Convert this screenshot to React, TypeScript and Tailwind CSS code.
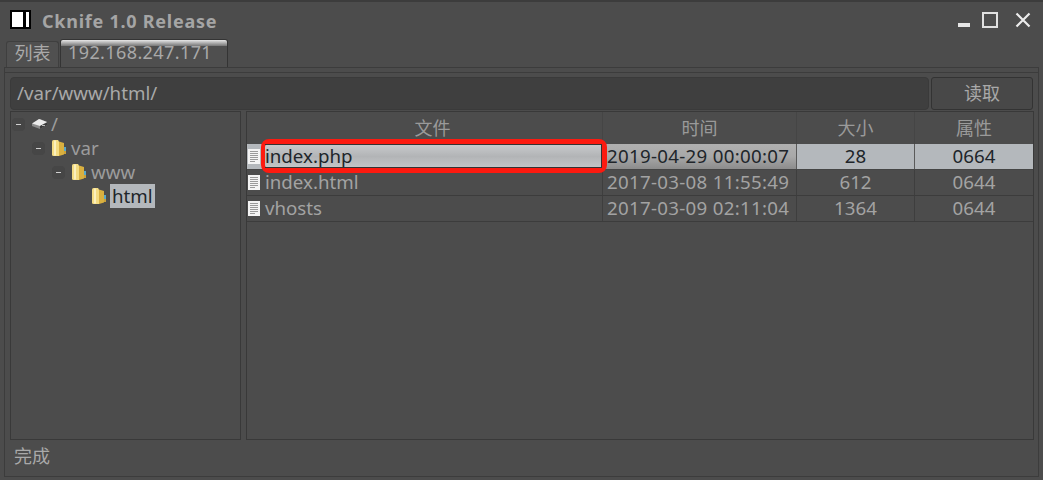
import React from 'react';

const FILES = [
  { name: 'index.php', time: '2019-04-29 00:00:07', size: '28', attr: '0664', selected: true },
  { name: 'index.html', time: '2017-03-08 11:55:49', size: '612', attr: '0644', selected: false },
  { name: 'vhosts', time: '2017-03-09 02:11:04', size: '1364', attr: '0644', selected: false },
];

const FolderIcon = () => (
  <svg width="16" height="18" viewBox="0 0 16 18" className="shrink-0">
    <path d="M1 2.5 Q1 1 2.5 1 H7 L8 2.5 V17 H2.5 Q1 17 1 15.5 Z" fill="#f4dc82" />
    <path d="M8 2.5 L13 4 V15.5 L8 17 Z" fill="#d9b040" />
    <rect x="3" y="1.5" width="2" height="15" fill="#fbf0bd" />
    <rect x="13" y="8" width="2" height="4" fill="#5ba8c8" />
    <rect x="13" y="12" width="2" height="3" fill="#c9a13a" />
  </svg>
);

const DriveIcon = () => (
  <svg width="17" height="12" viewBox="0 0 17 12" className="shrink-0">
    <path d="M1 6 L9 1 L16 4 L16 7 L9 11 L1 8 Z" fill="#8d8d8d" />
    <path d="M1 5.5 L8 1 L16 4 L9 8 Z" fill="#ececec" />
    <path d="M9 8 L16 4.5 V7 L9 11 Z" fill="#3a3a3a" />
    <rect x="11" y="7" width="3" height="1" fill="#bdbdbd" />
  </svg>
);

const FileIcon = () => (
  <svg width="12" height="15" viewBox="0 0 12 15" className="shrink-0">
    <rect x="0" y="0" width="12" height="15" fill="#f4f4f4" />
    <path d="M2 2.5 H10 M2 4.5 H10 M2 6.5 H10 M2 8.5 H10 M2 10.5 H10 M2 12.5 H7" stroke="#9a9a9a" strokeWidth="1" />
  </svg>
);

const Minus = () => (
  <span className="flex h-[13px] w-[13px] shrink-0 items-center justify-center rounded-sm bg-[#464646]">
    <span className="h-px w-[5px] bg-[#d0d0d0]" />
  </span>
);

export default function App() {
  return (
    <div
      className="relative flex h-[480px] w-[1043px] flex-col overflow-hidden border-t-2 border-[#3c3c3c] bg-[#4c4c4c] text-[18.7px] text-[#a9a9a9]"
      style={{ fontFamily: '"Noto Sans", "Noto Sans CJK SC", sans-serif' }}
    >
      {/* Title bar */}
      <div className="flex h-[38px] shrink-0 items-center pb-[3px] pl-[10px] pr-[12px]">
        <div className="flex h-[19px] w-[21px] justify-end border-2 border-black bg-white pr-[3px]">
          <span className="w-[3px] bg-black" />
        </div>
        <span className="ml-[11px] mt-[3px] text-[18px] font-bold tracking-[0.75px] text-[#a5a5a5]">Cknife 1.0 Release</span>
        <div className="ml-auto flex items-center">
          <span className="mt-[10px] h-[4px] w-[12px] bg-[#e6e6e6]" />
          <span className="ml-[12px] h-[16px] w-[16px] border-2 border-[#e0e0e0]" />
          <svg width="16" height="16" viewBox="0 0 16 16" className="ml-[17px]">
            <path d="M1.5 1.5 L14.5 14.5 M14.5 1.5 L1.5 14.5" stroke="#ececec" strokeWidth="2.2" />
          </svg>
        </div>
      </div>

      {/* Tabs */}
      <div className="flex h-[27px] shrink-0 items-end pl-[6px]">
        <div className="flex h-[26px] w-[53px] items-center justify-center rounded-t-[3px] border border-b-0 border-[#3f3f3f] bg-[#505050] pb-[3px] text-[18px]">
          列表
        </div>
        <div className="ml-[1px] flex h-[28px] w-[168px] flex-col rounded-t-[3px] border border-b-0 border-[#343434] bg-[#4f4f4f]">
          <div className="h-[6px] shrink-0 rounded-t-[2px] bg-gradient-to-b from-[#e8e8e8] to-[#777777]" />
          <div className="-mt-[4px] pl-[7px] text-[18px] leading-[21px] tracking-[0.4px]">192.168.247.171</div>
        </div>
      </div>

      {/* Panel */}
      <div className="mx-[4px] mb-[3px] flex min-h-0 flex-1 flex-col border border-[#3c3c3c] px-[5px] pt-[4px]">
        <div className="-mx-[5px] -mt-[4px] mb-[4px] h-[5px] border-b border-[#3c3c3c]" />

        {/* Path bar */}
        <div className="flex h-[33px] shrink-0 gap-[2px]">
          <div className="flex w-[920px] items-center rounded-[4px] border border-[#3a3a3a] bg-[#3f3f3f] pl-[6px]">
            /var/www/html/
          </div>
          <div className="flex w-[102px] items-center justify-center rounded-[3px] border border-[#333333] bg-[#484848] text-[18px]">
            读取
          </div>
        </div>

        <div className="mt-[1px] flex min-h-0 flex-1 gap-[5px]">
          {/* Tree */}
          <div className="h-[329px] w-[231px] shrink-0 border border-[#393939] text-[#9c9c9c]">
            <div className="flex h-[24px] items-center pl-[1px]">
              <Minus />
              <span className="ml-[6px]"><DriveIcon /></span>
              <span className="ml-[3px]">/</span>
            </div>
            <div className="flex h-[24px] items-center pl-[21px]">
              <Minus />
              <span className="ml-[6px]"><FolderIcon /></span>
              <span className="ml-[4px]">var</span>
            </div>
            <div className="flex h-[24px] items-center pl-[41px]">
              <Minus />
              <span className="ml-[6px]"><FolderIcon /></span>
              <span className="ml-[4px]">www</span>
            </div>
            <div className="flex h-[24px] items-center pl-[80px]">
              <FolderIcon />
              <span className="ml-[3px] flex h-[24px] items-center bg-[#b4b8bc] px-[2px] text-[#20252a]">html</span>
            </div>
          </div>

          {/* File table */}
          <div className="h-[329px] flex-1 border border-[#393939]">
            <div className="grid h-[32px] grid-cols-[356px_194px_118px_118px] text-center text-[18px] text-[#9a9a9a]">
              <div className="flex items-center justify-center border-r border-[#454545] pl-[16px]">文件</div>
              <div className="flex items-center justify-center border-r border-[#454545]">时间</div>
              <div className="flex items-center justify-center border-r border-[#454545]">大小</div>
              <div className="flex items-center justify-center">属性</div>
            </div>
            {FILES.map(f => (
              <div
                key={f.name}
                className={
                  f.selected
                    ? 'grid h-[26px] grid-cols-[356px_194px_118px_118px] grid-rows-[25px] border-b border-[#454545] leading-[20px] text-[#20252a]'
                    : 'grid h-[26px] grid-cols-[356px_194px_118px_118px] grid-rows-[25px] border-b border-[#3c3c3c] leading-[20px] text-[#a3a3a3]'
                }
              >
                <div className={f.selected ? 'flex items-center bg-[#b4b8bc] border-r border-[#5a5a5a]' : 'flex items-center border-r border-[#3e3e3e]'}>
                  <span className="ml-[1px]"><FileIcon /></span>
                  <span className={f.selected ? 'ml-[4px] flex h-full flex-1 items-center bg-gradient-to-b from-[#c9cbcd] via-[#b2b4b6] to-[#c6c8ca] pb-[1px] pl-[1px]' : 'ml-[5px] pb-[1px]'}>
                    {f.name}
                  </span>
                </div>
                <div className={f.selected ? 'flex items-center bg-gradient-to-b from-[#b0b0b0] via-[#a8a8a8] to-[#8c8c8c] border-r border-[#5a5a5a] pb-[1px] pl-[4px] tracking-[0.3px]' : 'flex items-center border-r border-[#3e3e3e] pb-[1px] pl-[4px] tracking-[0.3px]'}>
                  {f.time}
                </div>
                <div className={f.selected ? 'flex items-center justify-center bg-[#b4b8bc] border-r border-[#5a5a5a] pb-[1px]' : 'flex items-center justify-center border-r border-[#3e3e3e] pb-[1px]'}>
                  {f.size}
                </div>
                <div className={f.selected ? 'flex items-center justify-center bg-[#b4b8bc] pb-[1px]' : 'flex items-center justify-center pb-[1px]'}>
                  {f.attr}
                </div>
              </div>
            ))}
          </div>
        </div>

        {/* Status */}
        <div className="flex h-[32px] shrink-0 items-center pb-[8px] pl-[4px] text-[18px]">完成</div>
      </div>

      {/* Red annotation around the selected name */}
      <div className="absolute left-[261px] top-[137px] h-[34px] w-[346px] rounded-[8px] border-[5px] border-l-[4px] border-[#fc1a10]">
        <div className="h-full w-full border border-l-0 border-[#333333]" />
      </div>
    </div>
  );
}
